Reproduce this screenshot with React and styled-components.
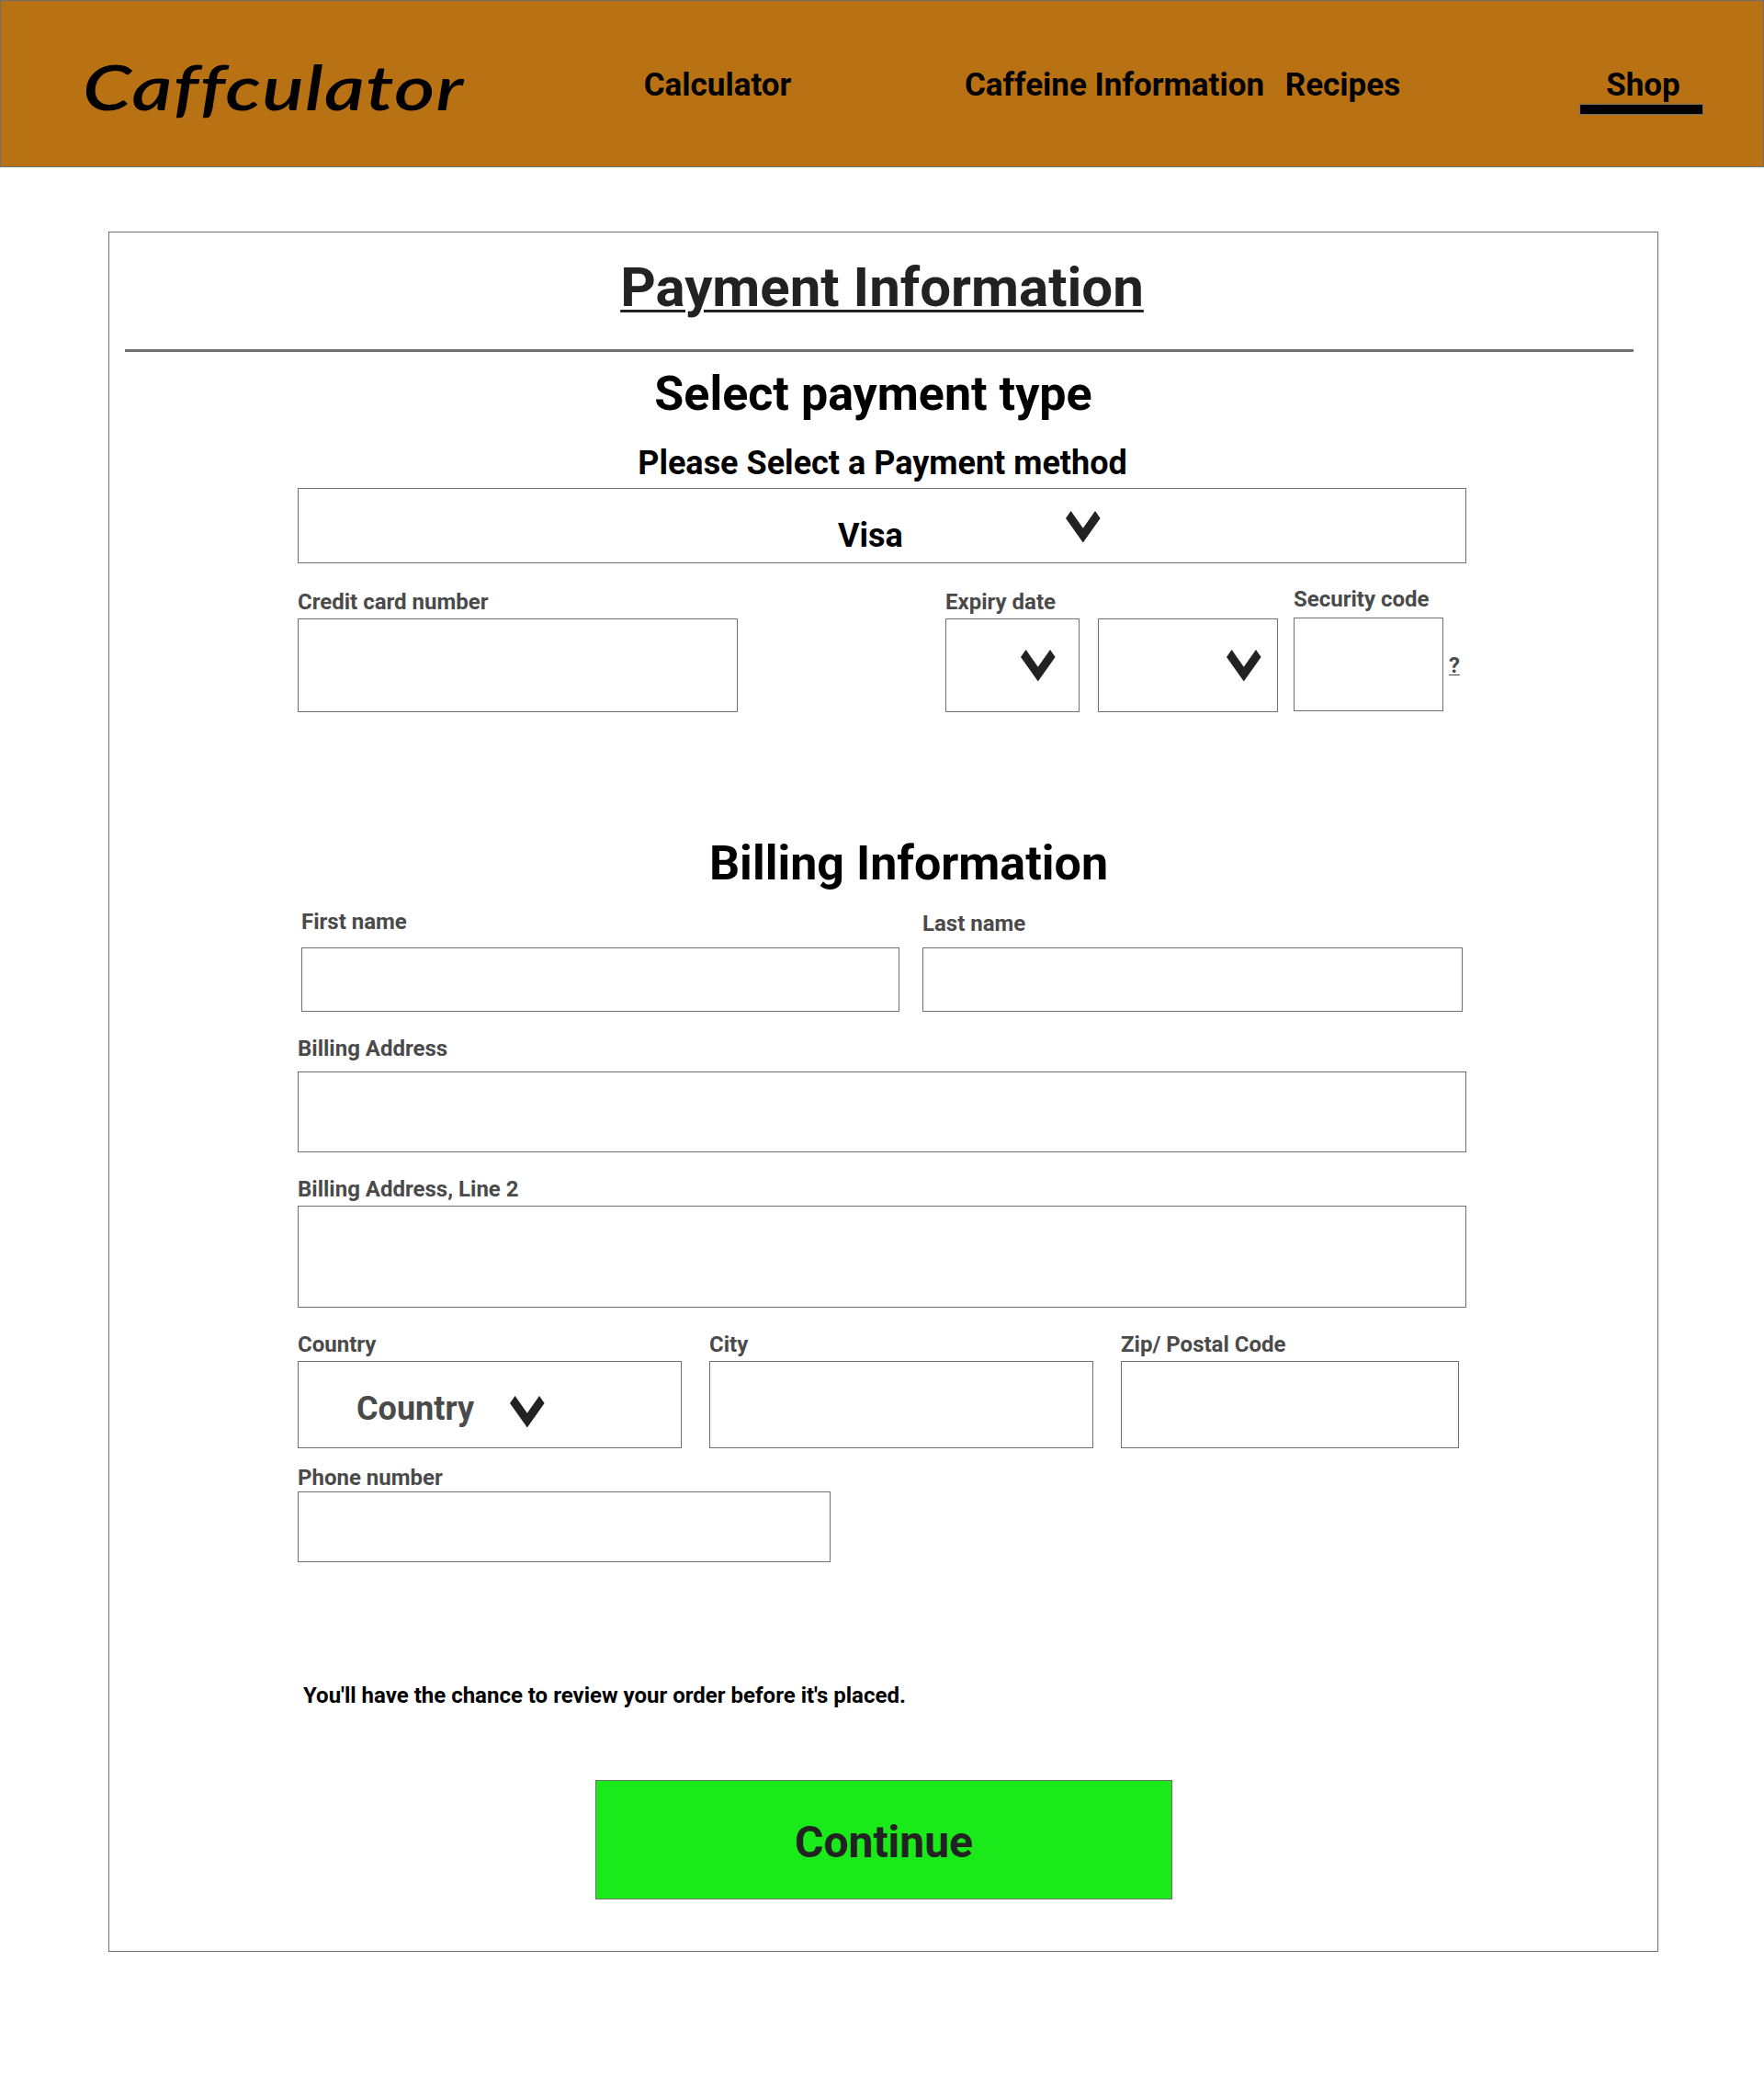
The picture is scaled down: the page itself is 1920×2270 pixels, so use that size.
import React from "react";
import styled, { createGlobalStyle } from "styled-components";

const GlobalStyle = createGlobalStyle`
  *, *::before, *::after { box-sizing: border-box; }
  body {
    margin: 0;
    background: #ffffff;
    color: #000000;
    font-family: Roboto, "Liberation Sans", sans-serif;
    font-weight: 700;
  }
`;

const Page = styled.div`
  width: 1920px;
  height: 2270px;
`;

const Header = styled.header`
  display: flex;
  align-items: flex-start;
  height: 182px;
  padding: 0 64px 0 89px;
  background: #b87214;
  border: 1px solid #707070;
`;

const Logo = styled.a`
  width: 440px;
  margin-top: 52px;
  font-family: "Segoe Script", "Ink Free", Lato, cursive;
  font-style: italic;
  font-weight: 600;
  font-size: 68px;
  line-height: 82px;
  letter-spacing: 1px;
  white-space: nowrap;
  transform: scaleX(1.25);
  transform-origin: left center;
`;

const Nav = styled.nav`
  display: flex;
  flex: 1;
  align-items: flex-start;
  margin: 71px 0 0 170px;
`;

const NavLink = styled.a`
  display: flex;
  flex-direction: column;
  align-items: center;
  width: ${(p) => p.$width}px;
  margin-right: ${(p) => p.$after || 0}px;
  font-size: 35px;
  line-height: 41px;
  white-space: nowrap;
`;

const ActiveText = styled.span`
  padding-left: 4px;
`;

const ActiveBar = styled.span`
  width: 135px;
  height: 12px;
  background: #000000;
  border: 1px solid #707070;
`;

const Card = styled.main`
  width: 1687px;
  height: 1872px;
  margin: 70px 0 0 118px;
  padding-top: 24px;
  border: 1px solid #707070;
`;

const Title = styled.h1`
  margin: 0 0 0 205px;
  width: 1272px;
  color: #222222;
  font-size: 60px;
  line-height: 71px;
  text-align: center;
  text-decoration: underline;
  text-decoration-thickness: 3px;
  text-underline-offset: 4px;
`;

const Divider = styled.hr`
  width: 1642px;
  height: 3px;
  margin: 32px 0 0 17px;
  border: 0;
  background: #707070;
`;

const Form = styled.form`
  display: flex;
  flex-direction: column;
  width: 1272px;
  margin-left: 205px;
`;

const SectionTitle = styled.h2`
  margin: ${(p) => p.$top}px 0 0;
  padding-left: ${(p) => p.$left || 0}px;
  padding-right: ${(p) => p.$right || 0}px;
  font-size: 52px;
  line-height: 61px;
  text-align: center;
`;

const Prompt = styled.p`
  margin: 24px 0 6px;
  padding-left: 1px;
  font-size: 36px;
  line-height: 42px;
  text-align: center;
`;

const Row = styled.div`
  display: flex;
  align-items: flex-start;
  gap: ${(p) => p.$gap || 0}px;
  margin-top: ${(p) => p.$top}px;
  padding-left: ${(p) => p.$left || 0}px;
`;

const FieldGroup = styled.div`
  display: flex;
  flex-direction: column;
  gap: ${(p) => p.$gap}px;
  margin-top: ${(p) => p.$top || 0}px;
  margin-left: ${(p) => p.$left || 0}px;
`;

const Label = styled.label`
  height: 28px;
  color: #4a4a4a;
  font-size: 24px;
  line-height: 28px;
  white-space: nowrap;
`;

const Input = styled.input`
  width: ${(p) => p.$width}px;
  height: ${(p) => p.$height}px;
  padding: 0 16px;
  border: 1px solid #707070;
  border-radius: 0;
  background: #ffffff;
  font: inherit;
  font-size: 24px;
  outline: none;
`;

const SelectBox = styled.div`
  display: flex;
  align-items: flex-start;
  width: ${(p) => p.$width}px;
  height: ${(p) => p.$height}px;
  padding-left: ${(p) => p.$left}px;
  border: 1px solid #707070;
  background: #ffffff;
`;

const SelectValue = styled.span`
  width: ${(p) => p.$width}px;
  margin-top: ${(p) => p.$top}px;
  color: ${(p) => p.$color};
  font-size: 36px;
  line-height: 42px;
`;

const ChevronIcon = styled.svg`
  display: block;
  width: 38px;
  height: 35px;
  margin-top: ${(p) => p.$top}px;
  fill: #222222;
`;

const Help = styled.a`
  margin: 72px 0 0 6px;
  color: #4a4a4a;
  font-size: 24px;
  line-height: 28px;
  text-decoration: underline;
  text-decoration-thickness: 1px;
  text-underline-offset: 2px;
`;

const Notice = styled.p`
  margin: 131px 0 0 6px;
  font-size: 24px;
  line-height: 28px;
`;

const ContinueButton = styled.button`
  width: 628px;
  height: 130px;
  margin: 78px 0 0 324px;
  padding: 5px 0 0;
  border: 1px solid #707070;
  background: #1aea1a;
  color: #222222;
  font: inherit;
  font-size: 48px;
  line-height: 57px;
`;

function Chevron({ top }) {
  return (
    <ChevronIcon $top={top} viewBox="0 0 38 35" aria-hidden="true">
      <path d="M0 8 5.6 0 18.8 18.8 32 0 37.6 8 18.8 34.6Z" />
    </ChevronIcon>
  );
}

function Field({ id, label, width, height, gap, top, left }) {
  return (
    <FieldGroup $gap={gap} $top={top} $left={left}>
      <Label htmlFor={id}>{label}</Label>
      <Input id={id} $width={width} $height={height} />
    </FieldGroup>
  );
}

export default function App() {
  return (
    <Page>
      <GlobalStyle />
      <Header>
        <Logo>Caffculator</Logo>
        <Nav>
          <NavLink $width={162} $after={187}>Calculator</NavLink>
          <NavLink $width={328} $after={21}>Caffeine Information</NavLink>
          <NavLink $width={127} $after={194}>Recipes</NavLink>
          <NavLink $width={135}>
            <ActiveText>Shop</ActiveText>
            <ActiveBar />
          </NavLink>
        </Nav>
      </Header>

      <Card>
        <Title>Payment Information</Title>
        <Divider />
        <Form onSubmit={(e) => e.preventDefault()}>
          <SectionTitle $top={15} $right={19}>Select payment type</SectionTitle>
          <Prompt>Please Select a Payment method</Prompt>
          <SelectBox $width={1272} $height={82} $left={587}>
            <SelectValue $width={248} $top={30} $color="#000000">Visa</SelectValue>
            <Chevron top={24} />
          </SelectBox>

          <Row $top={25}>
            <Field id="card" label="Credit card number" width={479} height={102} gap={4} top={3} />
            <FieldGroup $gap={4} $top={3} $left={226}>
              <Label>Expiry date</Label>
              <Row $top={0} $gap={20}>
                <SelectBox $width={146} $height={102} $left={81}>
                  <Chevron top={33} />
                </SelectBox>
                <SelectBox $width={196} $height={102} $left={139}>
                  <Chevron top={33} />
                </SelectBox>
              </Row>
            </FieldGroup>
            <Field id="code" label="Security code" width={163} height={102} gap={6} left={17} />
            <Help>?</Help>
          </Row>

          <SectionTitle $top={134} $left={58}>Billing Information</SectionTitle>
          <Row $top={19} $left={4} $gap={25}>
            <Field id="first" label="First name" width={651} height={70} gap={14} />
            <Field id="last" label="Last name" width={588} height={70} gap={12} top={2} />
          </Row>
          <Field id="address1" label="Billing Address" width={1272} height={88} gap={11} top={26} />
          <Field id="address2" label="Billing Address, Line 2" width={1272} height={111} gap={4} top={26} />

          <Row $top={26} $gap={30}>
            <FieldGroup $gap={4}>
              <Label>Country</Label>
              <SelectBox $width={418} $height={95} $left={63}>
                <SelectValue $width={167} $top={30} $color="#4a4a4a">Country</SelectValue>
                <Chevron top={37} />
              </SelectBox>
            </FieldGroup>
            <Field id="city" label="City" width={418} height={95} gap={4} />
            <Field id="zip" label="Zip/ Postal Code" width={368} height={95} gap={4} />
          </Row>
          <Field id="phone" label="Phone number" width={580} height={77} gap={1} top={18} />

          <Notice>You'll have the chance to review your order before it's placed.</Notice>
          <ContinueButton type="submit">Continue</ContinueButton>
        </Form>
      </Card>
    </Page>
  );
}
